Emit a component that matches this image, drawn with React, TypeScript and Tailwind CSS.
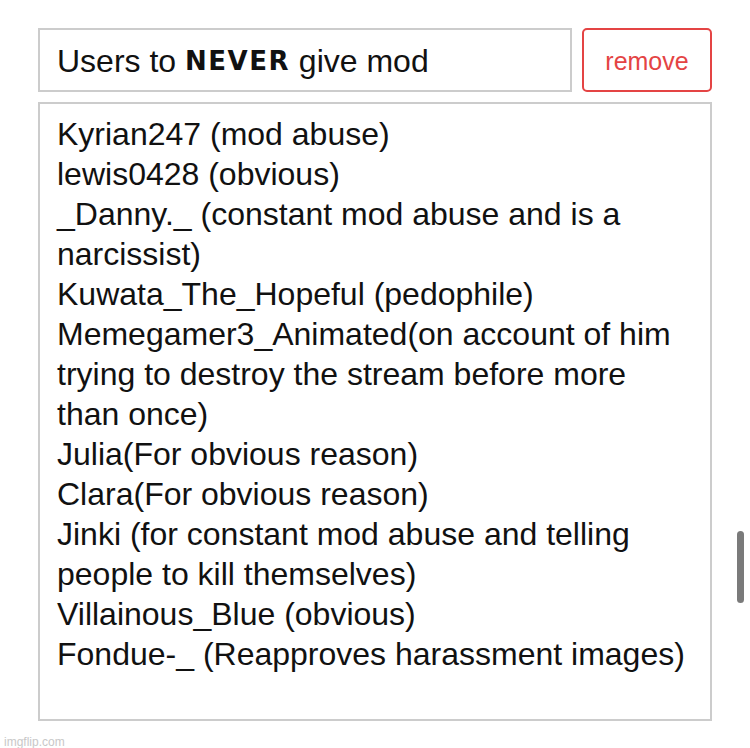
import React from "react";

const lines = [
  "Kyrian247 (mod abuse)",
  "lewis0428 (obvious)",
  "_Danny._ (constant mod abuse and is a narcissist)",
  "Kuwata_The_Hopeful (pedophile)",
  "Memegamer3_Animated(on account of him trying to destroy the stream before more than once)",
  "Julia(For obvious reason)",
  "Clara(For obvious reason)",
  "Jinki (for constant mod abuse and telling people to kill themselves)",
  "Villainous_Blue (obvious)",
  "Fondue-_ (Reapproves harassment images)",
];

export default function App() {
  return (
    <div className="relative w-[750px] h-[748px] bg-white overflow-hidden" style={{ fontFamily: '"Liberation Sans", Arial, sans-serif' }}>
      <div className="pt-[28px] pl-[38px] flex flex-col gap-[10px]">
        <div className="flex gap-[10px]">
          <div className="w-[534px] h-[64px] border-2 border-[#cccccc] flex items-center pl-[17px] pt-[2px] text-[32px] text-[#111] whitespace-nowrap">
            <span>Users to&nbsp;</span>
            <span className="font-bold text-[26px] tracking-[1.5px]" style={{ fontFamily: '"DejaVu Sans", sans-serif' }}>NEVER</span>
            <span>&nbsp;give mod</span>
          </div>
          <div className="w-[130px] h-[64px] border-2 border-[#e44444] rounded-[5px] flex items-center justify-center pt-[3px] text-[25px] text-[#e44444]">
            remove
          </div>
        </div>
        <div className="w-[674px] h-[619px] border-2 border-[#cccccc] pl-[17px] pr-[16px] pt-[10px] text-[32px] leading-[40px] text-[#111]">
          {lines.map((l, i) => (
            <div key={i}>{l}</div>
          ))}
        </div>
      </div>
      <div className="absolute left-[737px] top-[531px] w-[7px] h-[72px] rounded-full bg-[#7a7a7a]" />
      <div className="absolute left-[4px] top-[733px] text-[12px] text-[#c8c8c8]">imgflip.com</div>
    </div>
  );
}
